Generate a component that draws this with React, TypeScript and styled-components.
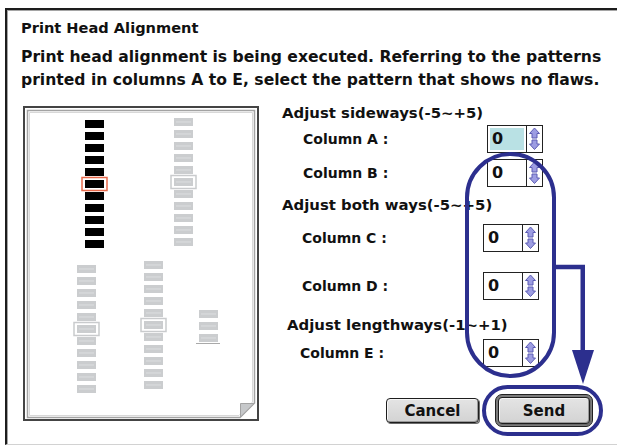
import React from "react"
import styled, { createGlobalStyle } from "styled-components"

const GlobalStyle = createGlobalStyle`
  html, body {
    margin: 0;
    padding: 0;
    background: #fff;
  }
  body {
    font-family: "DejaVu Sans", "Liberation Sans", sans-serif;
    font-weight: 700;
    color: #111;
  }
`

const BLUE = "#2c2f8e"

const Page = styled.div`
  position: relative;
  width: 617px;
  height: 446px;
  overflow: hidden;
`

const Window = styled.section`
  box-sizing: border-box;
  margin: 8px 0 0 5px;
  width: 640px;
  height: 437px;
  border-top: 2px solid #1d1d1d;
  border-left: 2px solid #1d1d1d;
  border-bottom: 1px solid #d2d2d2;
  box-shadow: inset 1px 1px 0 #a5a5a5;
  padding: 8px 0 0 14px;
`

const Title = styled.h1`
  margin: 0;
  font-size: 14.6px;
  line-height: 20px;
  font-weight: 700;
`

const Message = styled.p`
  margin: 8px 0 0;
  font-size: 15.6px;
  line-height: 23px;
  width: 594px;
`

const Main = styled.div`
  display: flex;
  align-items: flex-start;
  margin-top: 11px;
`

const Paper = styled.div`
  box-sizing: border-box;
  width: 236px;
  height: 315px;
  margin: 3px 0 0 2px;
  border: 2px solid #444;
  svg {
    display: block;
  }
`

const Form = styled.div`
  display: flex;
  flex-direction: column;
  width: 311px;
  margin-left: 23px;
`

const Heading = styled.div<{ $indent?: number; $top?: number }>`
  height: 20px;
  line-height: 20px;
  font-size: 14.9px;
  padding-left: ${(p) => p.$indent ?? 0}px;
  margin-top: ${(p) => p.$top ?? 0}px;
  white-space: nowrap;
`

const Row = styled.div<{ $top: number }>`
  display: flex;
  align-items: center;
  height: 28px;
  margin-top: ${(p) => p.$top}px;
`

const Label = styled.span<{ $indent: number; $width: number }>`
  box-sizing: border-box;
  width: ${(p) => p.$width}px;
  padding-left: ${(p) => p.$indent}px;
  font-size: 14px;
  white-space: nowrap;
`

const Field = styled.div<{ $active?: boolean }>`
  box-sizing: border-box;
  width: 40px;
  height: 28px;
  border: 1px solid #222;
  padding-left: 4px;
  font-size: 16px;
  line-height: 26px;
  background: ${(p) => (p.$active ? "#b9e1e4" : "#fff")};
  box-shadow: ${(p) => (p.$active ? "inset 0 0 0 2px #fff" : "none")};
`

const Arrows = styled.div`
  box-sizing: border-box;
  width: 16px;
  height: 28px;
  border: 1px solid #222;
  border-left: none;
  background: #fff;
  svg {
    display: block;
  }
`

const Buttons = styled.div`
  display: flex;
  justify-content: flex-end;
  align-items: center;
  gap: 16px;
  margin-top: 27px;
`

const Button = styled.button`
  box-sizing: border-box;
  width: 93px;
  height: 25px;
  padding: 0;
  border: 1px solid #1e1e1e;
  border-radius: 4px;
  background: linear-gradient(#e4e4e4, #d3d3d3);
  box-shadow: inset 1px 1px 0 #f6f6f6, inset -1px -1px 0 #9a9a9a, 1px 1px 0 #6a6a6a;
  font-family: "DejaVu Sans", sans-serif;
  font-weight: 700;
  font-size: 15px;
  color: #111;
`

const DefaultRing = styled.div`
  box-sizing: border-box;
  width: 98px;
  height: 33px;
  padding: 2px;
  border: 1px solid #222;
  border-radius: 7px;
  background: #7c7c7c;
  display: flex;
  ${Button} {
    width: 100%;
    height: 100%;
    border-radius: 4px;
  }
`

const Pill = styled.div`
  position: absolute;
  left: 465px;
  top: 152px;
  width: 91px;
  height: 226px;
  box-sizing: border-box;
  border: 4px solid ${BLUE};
  border-radius: 46px;
  pointer-events: none;
`

const Ring = styled.div`
  position: absolute;
  left: 482px;
  top: 385px;
  width: 121px;
  height: 51px;
  box-sizing: border-box;
  border: 4px solid ${BLUE};
  border-radius: 26px;
  pointer-events: none;
`

const Pointer = styled.svg`
  position: absolute;
  left: 554px;
  top: 262px;
  pointer-events: none;
`

const SpinArrows = () => (
  <svg width="15" height="26" viewBox="0 0 15 26">
    <polygon
      points="7.5,2 12.5,7.5 10,7.5 10,12 5,12 5,7.5 2.5,7.5"
      fill="#9d9de2"
      stroke="#5d5db4"
      strokeWidth="1"
    />
    <polygon
      points="5,14 10,14 10,18 12.5,18 7.5,23.5 2.5,18 5,18"
      fill="#9d9de2"
      stroke="#5d5db4"
      strokeWidth="1"
    />
  </svg>
)

const Spinner = ({ active }: { active?: boolean }) => (
  <>
    <Field $active={active}>0</Field>
    <Arrows>
      <SpinArrows />
    </Arrows>
  </>
)

// printed pattern columns, in paper coordinates
const columns = [
  { x: 60, y: 12, count: 11, pick: 5, dark: true },
  { x: 149, y: 10, count: 11, pick: 5 },
  { x: 52, y: 157, count: 11, pick: 5 },
  { x: 119, y: 153, count: 11, pick: 5 },
  { x: 174, y: 202, count: 3, pick: -1 },
]

const PaperSheet = () => (
  <svg width="232" height="311" viewBox="0 0 232 311">
    <path d="M2.5 2.5 H229.5 V295 L215 309.5 H2.5 Z" fill="#fff" stroke="#a3a3a3" strokeWidth="1.5" />
    <path d="M4.5 4.5 H227.5 V294 L214 307.5 H4.5 Z" fill="none" stroke="#d8d8d8" strokeWidth="1" />
    <path d="M215.5 295.5 H229 L215.5 309 Z" fill="#c6c8ca" stroke="#a3a3a3" strokeWidth="1" />
    {columns.map((c, ci) =>
      Array.from({ length: c.count }).map((_, i) => {
        const y = c.y + i * 12
        return (
          <g key={`${ci}-${i}`}>
            <rect x={c.x} y={y} width="19" height="8" fill={c.dark ? "#000" : "#cbcdcf"} />
            {!c.dark && <line x1={c.x + 2} y1={y + 4} x2={c.x + 17} y2={y + 4} stroke="#dcdee0" strokeWidth="1" />}
            {i === c.pick && (
              <rect
                x={c.x - 3}
                y={y - 2.5}
                width="25"
                height="13"
                fill="none"
                stroke={c.dark ? "#e8684a" : "#c9cbcd"}
                strokeWidth="1.5"
              />
            )}
          </g>
        )
      })
    )}
    <line x1="171" y1="235.5" x2="195" y2="235.5" stroke="#a9a9a9" strokeWidth="1" />
  </svg>
)

const App = () => {
  return (
    <Page>
      <GlobalStyle />
      <Window>
        <Title>Print Head Alignment</Title>
        <Message>
          Print head alignment is being executed. Referring to the patterns printed in columns A to E, select the
          pattern that shows no flaws.
        </Message>
        <Main>
          <Paper>
            <PaperSheet />
          </Paper>
          <Form>
            <Heading>Adjust sideways(-5~+5)</Heading>
            <Row $top={2}>
              <Label $indent={21} $width={205}>Column A :</Label>
              <Spinner active />
            </Row>
            <Row $top={6}>
              <Label $indent={21} $width={205}>Column B :</Label>
              <Spinner />
            </Row>
            <Heading $top={8}>Adjust both ways(-5~+5)</Heading>
            <Row $top={9}>
              <Label $indent={20} $width={201}>Column C :</Label>
              <Spinner />
            </Row>
            <Row $top={20}>
              <Label $indent={20} $width={201}>Column D :</Label>
              <Spinner />
            </Row>
            <Heading $indent={5} $top={15}>Adjust lengthways(-1~+1)</Heading>
            <Row $top={4}>
              <Label $indent={18} $width={201}>Column E :</Label>
              <Spinner />
            </Row>
            <Buttons>
              <Button>Cancel</Button>
              <DefaultRing>
                <Button>Send</Button>
              </DefaultRing>
            </Buttons>
          </Form>
        </Main>
      </Window>
      <Pill />
      <Ring />
      <Pointer width="42" height="124" viewBox="0 0 42 124">
        <path d="M2 5 H28.75 V90" fill="none" stroke={BLUE} strokeWidth="4.5" />
        <polygon points="18,88 40,88 29,122" fill={BLUE} />
      </Pointer>
    </Page>
  )
}

export default App
